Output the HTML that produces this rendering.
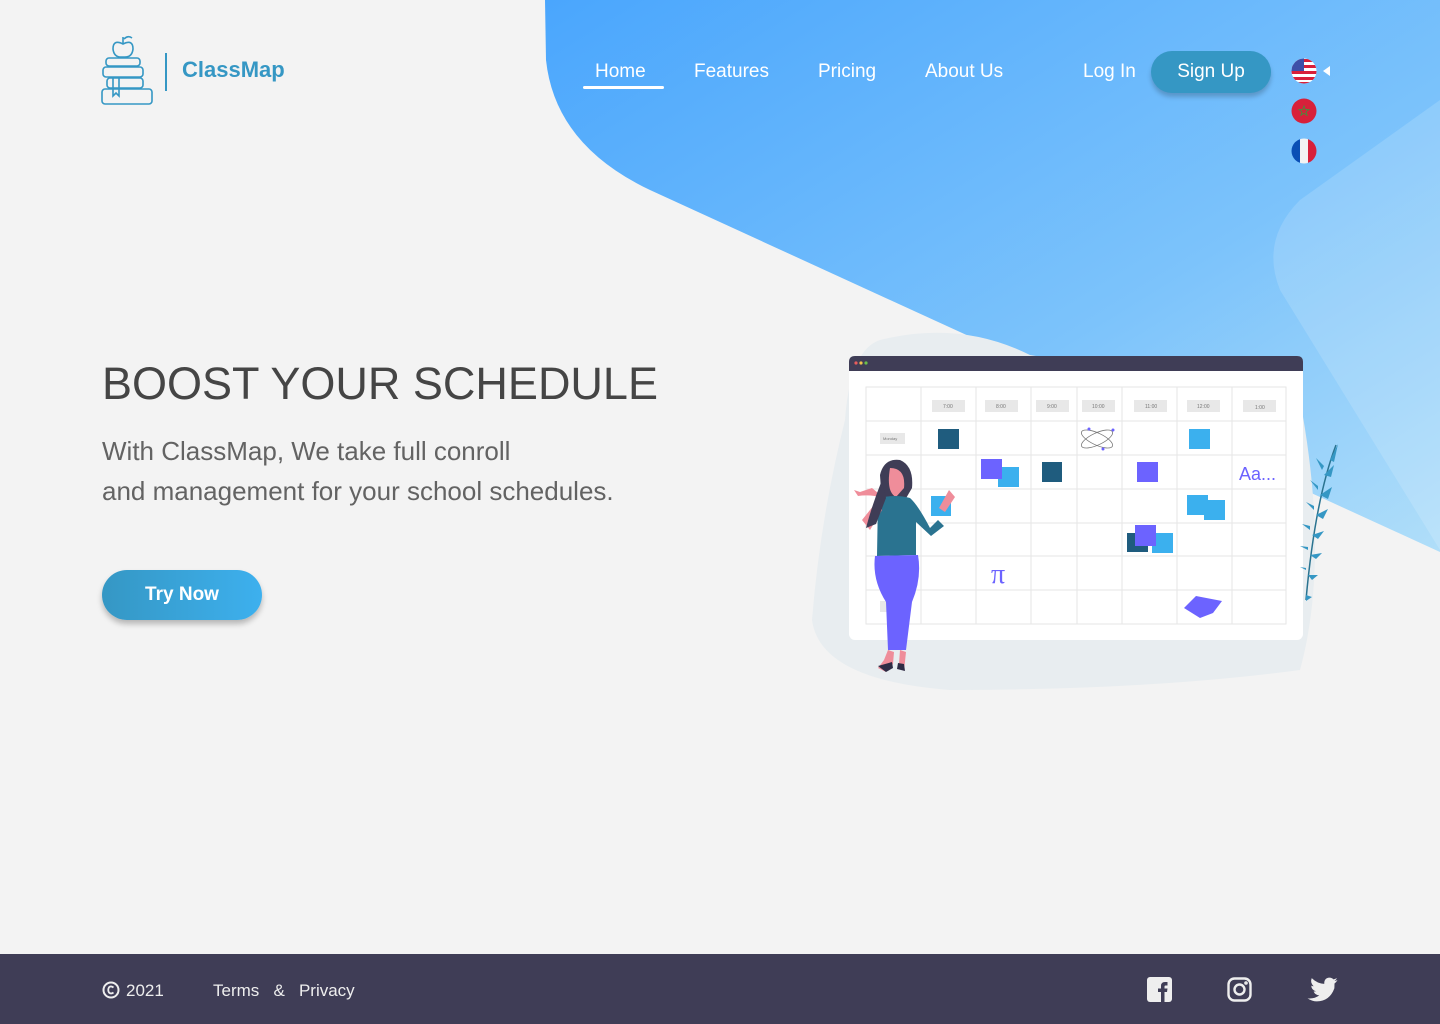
<!DOCTYPE html>
<html><head><meta charset="utf-8"><style>
*{margin:0;padding:0;box-sizing:border-box}
body{width:1440px;height:1024px;background:#f3f3f3;font-family:"Liberation Sans",sans-serif;position:relative;overflow:hidden}
.abs{position:absolute}
.nav a{position:absolute;top:61px;color:#fff;font-size:19px;text-decoration:none;white-space:nowrap}
h1{position:absolute;left:102px;top:358px;font-size:45px;font-weight:400;color:#454545;white-space:nowrap}
.sub{position:absolute;left:102px;top:431px;font-size:26px;line-height:40px;color:#636363;white-space:nowrap}
.try{position:absolute;left:102px;top:570px;width:160px;height:50px;border-radius:25px;background:linear-gradient(90deg,#3597c4,#3db0ee);color:#fff;font-weight:bold;font-size:19px;text-align:center;line-height:50px;box-shadow:0 4px 6px rgba(0,0,0,.25)}
.footer{position:absolute;left:0;top:954px;width:1440px;height:70px;background:#3f3d56;color:#eee;font-size:17px}
</style></head><body>
<svg class="abs" style="left:0;top:0" width="1440" height="1024">
<defs>
<linearGradient id="g" x1="0" y1="0" x2="1" y2="1"><stop offset="0" stop-color="#4aa6fd"/><stop offset="0.6" stop-color="#7cc3fb"/><stop offset="1" stop-color="#b0def9"/></linearGradient>
</defs>
<path d="M545,0 L1440,0 L1440,552 L650,190 Q555,145 546,60 Z" fill="url(#g)"/>
<path d="M1440,100 L1300,200 Q1260,240 1280,290 L1440,550 Z" fill="#fff" opacity=".15"/>
<path d="M880,340 Q960,320 1030,355 L1300,400 Q1330,560 1300,670 Q1150,690 950,690 Q820,680 812,620 Q820,520 845,420 Q850,350 880,340 Z" fill="#e8edf0"/>
<rect x="849" y="356" width="454" height="284" rx="6" fill="#fff"/>
<path d="M855,356 H1297 Q1303,356 1303,362 V371 H849 V362 Q849,356 855,356 Z" fill="#3f3d56"/>
<circle cx="856" cy="363" r="1.6" fill="#e85d5d"/><circle cx="861" cy="363" r="1.6" fill="#f2c24a"/><circle cx="866" cy="363" r="1.6" fill="#6cc04a"/>
<g stroke="#e6e6e6" stroke-width="1" fill="none">
<rect x="866" y="387" width="420" height="237"/>
<path d="M921,387V624M976,387V624M1031,387V624M1077,387V624M1122,387V624M1177,387V624M1232,387V624M866,421H1286M866,455H1286M866,489H1286M866,523H1286M866,556H1286M866,590H1286"/>
</g>
<g fill="#e8e8e8"><rect x="932" y="400" width="33" height="12"/><rect x="985" y="400" width="33" height="12"/><rect x="1036" y="400" width="33" height="12"/><rect x="1082" y="400" width="33" height="12"/><rect x="1134" y="400" width="33" height="12"/><rect x="1187" y="400" width="33" height="12"/><rect x="1243" y="400" width="33" height="12"/><rect x="880" y="433" width="25" height="11"/><rect x="880" y="601" width="25" height="11"/></g>
<g font-size="5" fill="#777" font-family="Liberation Sans"><text x="943" y="408">7:00</text><text x="996" y="408">8:00</text><text x="1047" y="408">9:00</text><text x="1092" y="408">10:00</text><text x="1145" y="408">11:00</text><text x="1197" y="408">12:00</text><text x="1255" y="409">1:00</text><text x="883" y="440" font-size="4">Monday</text></g>
<rect x="938" y="429" width="21" height="20" fill="#1f5c7e"/>
<rect x="1189" y="429" width="21" height="20" fill="#3bb0ee"/>
<g stroke="#777" fill="none" stroke-width=".8"><ellipse cx="1097" cy="439" rx="17" ry="6" transform="rotate(25 1097 439)"/><ellipse cx="1097" cy="439" rx="17" ry="6" transform="rotate(-25 1097 439)"/></g>
<circle cx="1089" cy="429" r="1.5" fill="#6c63ff"/><circle cx="1113" cy="430" r="1.5" fill="#6c63ff"/><circle cx="1103" cy="449" r="1.5" fill="#6c63ff"/>
<rect x="998" y="467" width="21" height="20" fill="#3bb0ee"/><rect x="981" y="459" width="21" height="20" fill="#6c63ff"/>
<rect x="1042" y="462" width="20" height="20" fill="#1f5c7e"/>
<rect x="1137" y="462" width="21" height="20" fill="#6c63ff"/>
<text x="1239" y="480" font-size="18" fill="#6c63ff" font-family="Liberation Sans">Aa...</text>
<rect x="1204" y="500" width="21" height="20" fill="#3bb0ee"/><rect x="1187" y="495" width="21" height="20" fill="#3bb0ee"/>
<rect x="931" y="496" width="20" height="20" fill="#3bb0ee"/>
<rect x="1127" y="533" width="21" height="19" fill="#1f5c7e"/><rect x="1152" y="533" width="21" height="20" fill="#3bb0ee"/><rect x="1135" y="525" width="21" height="21" fill="#6c63ff"/>
<text x="991" y="583" font-size="28" fill="#6c63ff" font-family="Liberation Serif">π</text>
<path d="M1184,608 L1196,596 L1222,601 L1213,613 L1200,618 Z" fill="#6c63ff"/>
<!-- woman -->
<path d="M880,475 Q884,458 900,460 Q914,466 912,488 L905,500 L882,505 Z" fill="#3f3d56"/>
<path d="M890,468 Q906,468 904,488 L896,497 Q886,492 890,468Z" fill="#ef8d9a"/>
<path d="M884,498 Q870,494 858,496 L854,490 L860,492 L872,488 Z" fill="#ef8d9a"/>
<path d="M878,498 Q896,494 910,498 Q918,505 930,528 L938,520 L944,526 L931,536 L916,522 L916,555 L877,556 Z" fill="#2a7390"/>
<path d="M878,500 L862,520 L870,530 L882,510 Z" fill="#ef8d9a"/>
<path d="M949,490 L955,497 L945,512 L939,508 Z" fill="#ef8d9a"/>
<path d="M882,480 Q872,505 866,528 L876,524 L886,498 Z" fill="#3f3d56"/>
<path d="M875,556 L918,555 Q922,578 912,602 L906,650 L888,650 L886,602 Q872,580 875,556 Z" fill="#6c63ff"/>
<path d="M888,650 L884,660 L878,668 L886,672 L893,664 L894,652Z M900,650 L899,664 L904,671 L906,652Z" fill="#ef8d9a"/>
<path d="M878,666 L886,672 L893,668 L892,662Z M898,663 L897,669 L905,671 L904,664Z" fill="#2e2c45"/>
<!-- plant -->
<path d="M1336,445 Q1315,500 1306,600" stroke="#2a7390" stroke-width="1.5" fill="none"/>
<g fill="#3597c4">
<path d="M1330,460 l8,-16 l-4,18z M1324,475 l10,-10 l-3,12z M1320,495 l12,-8 l-4,12z M1316,515 l12,-6 l-5,10z M1312,535 l12,-4 l-6,8z M1310,555 l12,-2 l-6,6z M1308,575 l10,0 l-6,5z M1306,595 l6,2 l-6,4z"/>
<path d="M1322,470 l-6,-12 l8,8z M1318,490 l-8,-10 l8,6z M1314,510 l-8,-8 l8,4z M1310,530 l-8,-6 l8,2z M1308,550 l-8,-4 l8,1z M1306,570 l-6,-3 l6,1z"/>
</g>
</svg>

<!-- logo -->
<svg class="abs" style="left:100px;top:34px" width="56" height="74" viewBox="0 0 56 74" fill="none" stroke="#3597c4" stroke-width="1.6">
<path d="M23,10 Q13,5 13,15 Q14,24 23,23 Q32,24 33,15 Q33,5 23,10Z"/><path d="M23,10 V3 M24,5 Q28,1 32,4"/>
<rect x="6" y="24" width="34" height="8" rx="3"/><rect x="3" y="33" width="40" height="10" rx="3"/><rect x="7" y="44" width="36" height="10" rx="3"/><rect x="2" y="55" width="50" height="15" rx="3"/>
<path d="M13,44 V62 L16,59 L19,62 V44"/>
</svg>
<div class="abs" style="left:165px;top:53px;width:2px;height:38px;background:#3597c4"></div>
<div class="abs" style="left:182px;top:57px;font-size:22px;font-weight:bold;color:#3597c4">ClassMap</div>

<div class="nav">
<a style="left:595px">Home</a>
<div class="abs" style="left:583px;top:86px;width:81px;height:3px;border-radius:2px;background:#fff"></div>
<a style="left:694px">Features</a>
<a style="left:818px">Pricing</a>
<a style="left:925px">About Us</a>
<a style="left:1083px">Log In</a>
</div>
<div class="abs" style="left:1151px;top:51px;width:120px;height:42px;border-radius:21px;background:#3597c4;color:#fff;font-size:19px;text-align:center;line-height:42px;box-shadow:0 4px 5px rgba(0,0,0,.2)">Sign Up</div>

<!-- flags -->
<svg class="abs" style="left:1290px;top:57px" width="50" height="110">
<defs><clipPath id="c1"><circle cx="14" cy="14" r="12.5"/></clipPath><clipPath id="c3"><circle cx="14" cy="94" r="12.5"/></clipPath></defs>
<g clip-path="url(#c1)"><rect x="0" y="0" width="28" height="28" fill="#fff"/>
<g fill="#d8203a"><rect x="0" y="2" width="28" height="3"/><rect x="0" y="8" width="28" height="3"/><rect x="0" y="14" width="28" height="3"/><rect x="0" y="20" width="28" height="3"/><rect x="0" y="25" width="28" height="3"/></g>
<rect x="0" y="0" width="14" height="14" fill="#3d4fa8"/></g>
<polygon points="35,14 42,9 42,19" fill="#fff" transform="translate(-2,0)"/>
<circle cx="14" cy="54" r="12.5" fill="#d8203a"/>
<polygon points="14,49 15.3,52.5 19,52.6 16,54.8 17.1,58.3 14,56.2 10.9,58.3 12,54.8 9,52.6 12.7,52.5" fill="none" stroke="#4a8a3a" stroke-width="0.9"/>
<g clip-path="url(#c3)"><rect x="0" y="80" width="10" height="28" fill="#0a4fb5"/><rect x="10" y="80" width="8" height="28" fill="#f3f3f3"/><rect x="18" y="80" width="12" height="28" fill="#d8203a"/></g>
</svg>

<h1>BOOST YOUR SCHEDULE</h1>
<div class="sub">With ClassMap, We take full conroll<br>and management for your school schedules.</div>
<div class="try">Try Now</div>

<div class="footer">
<svg class="abs" style="left:102px;top:27px" width="18" height="18" viewBox="0 0 18 18"><circle cx="9" cy="9" r="7.5" fill="none" stroke="#eee" stroke-width="2"/><path d="M11.5,6.5 Q9,4.5 7,6.3 Q5.5,9 7,11.6 Q9,13.4 11.5,11.5" fill="none" stroke="#eee" stroke-width="1.8"/></svg>
<div class="abs" style="left:126px;top:27px">2021</div>
<div class="abs" style="left:213px;top:27px">Terms &nbsp; &amp; &nbsp; Privacy</div>
<svg class="abs" style="left:1147px;top:23px" width="25" height="25" viewBox="0 0 25 25"><rect width="25" height="25" rx="3" fill="#eee"/><path d="M14,25 V15 H11 V11.5 H14 V9 Q14,5 18,5 H20.5 V8.5 H18.5 Q17.5,8.5 17.5,9.5 V11.5 H20.5 L20,15 H17.5 V25Z" fill="#3f3d56"/></svg>
<svg class="abs" style="left:1227px;top:23px" width="25" height="25" viewBox="0 0 25 25" fill="none" stroke="#eee" stroke-width="2.4"><rect x="1.5" y="1.5" width="22" height="22" rx="6"/><circle cx="12.5" cy="12.5" r="5"/><circle cx="19" cy="6" r=".6" fill="#eee"/></svg>
<svg class="abs" style="left:1307px;top:23px" width="31" height="25" viewBox="0 0 24 20"><path d="M24,2.4 Q23,3 21.6,3.2 Q23,2.3 23.5,0.8 Q22.2,1.6 20.8,1.9 Q19.5,0.5 17.6,0.5 Q13.2,0.8 13.4,5.5 Q7.7,5.2 3.4,0.9 Q1.9,4.4 4.9,7.4 Q3.9,7.4 3,6.9 Q3.1,10.4 6.8,11.4 Q5.8,11.7 4.9,11.5 Q5.9,14.4 9.4,14.7 Q5.6,17.6 0,17.1 Q3.7,19.5 7.5,19.5 Q17.8,19.3 21.5,9 Q21.6,6.4 21.6,5.2 Q23.2,4 24,2.4Z" fill="#eee"/></svg>
</div>
</body></html>
